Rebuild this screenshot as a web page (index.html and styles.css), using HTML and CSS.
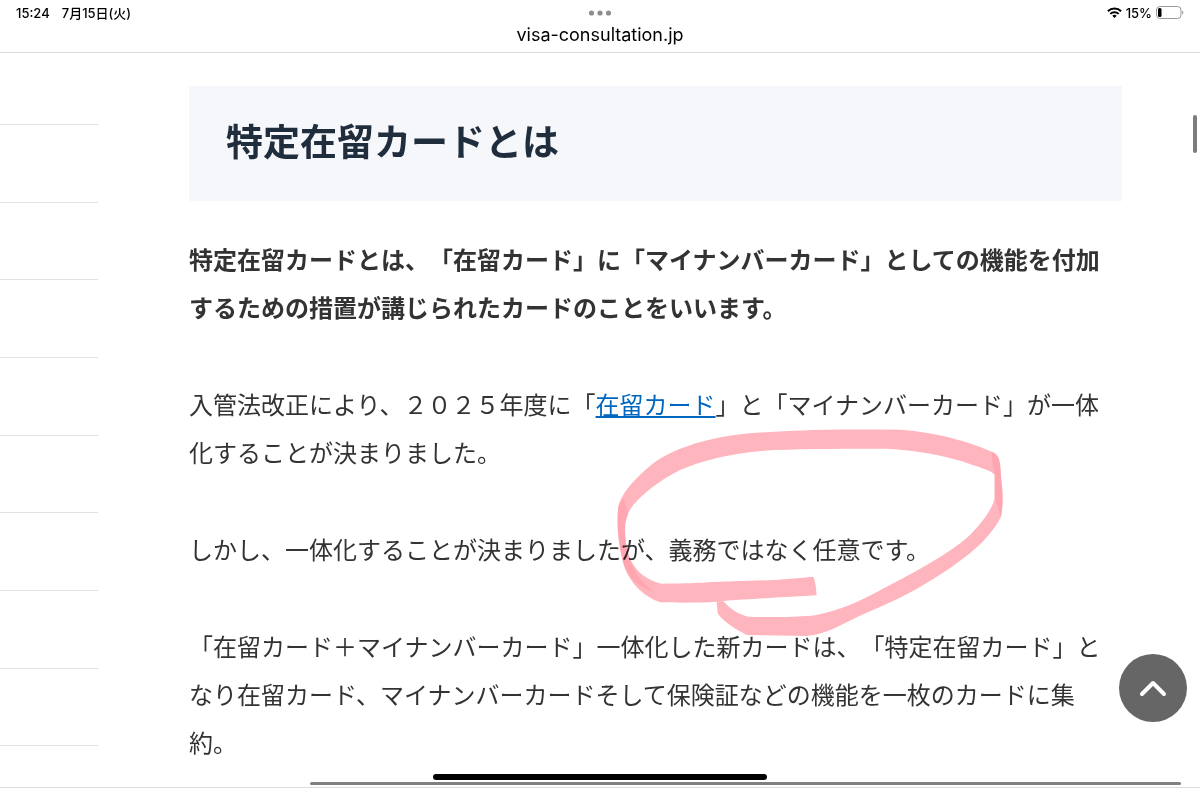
FILE: index.html
```
<!DOCTYPE html>
<html lang="ja">
<head>
    <meta charset="UTF-8">
    <meta name="viewport" content="width=device-width, initial-scale=1.0">
    <title>特定在留カードとは</title>
    <link rel="stylesheet" href="styles.css">
</head>
<body>

    <header class="topbar">
        <div class="status">
            <div class="status-left">
                <span>15:24</span>
                <span>7月15日(火)</span>
            </div>
            <svg class="dots" width="24" height="6" viewBox="0 0 24 6" fill="#8e8e8e" aria-hidden="true">
                <circle cx="3.5" cy="3" r="2.6"/>
                <circle cx="12" cy="3" r="2.6"/>
                <circle cx="20.5" cy="3" r="2.6"/>
            </svg>
            <div class="status-right">
                <svg width="15" height="11" viewBox="0 0 15 11" aria-hidden="true">
                    <g fill="none" stroke="#000" stroke-width="2">
                        <path d="M.9 4.3a9.4 9.4 0 0 1 13.2 0"/>
                        <path d="M3.3 6.9a6 6 0 0 1 8.4 0"/>
                    </g>
                    <path d="M7.5 10.9 5.3 8.7a3.2 3.2 0 0 1 4.4 0z"/>
                </svg>
                <span>15%</span>
                <svg width="28" height="13" viewBox="0 0 28 13" aria-hidden="true">
                    <rect x=".5" y=".5" width="24.5" height="12" rx="3.5" fill="none" stroke="#999"/>
                    <rect x="2" y="2" width="3.5" height="9" rx="1.5"/>
                    <path d="M26.2 4.5c1.6.6 1.6 3.4 0 4z" fill="#999"/>
                </svg>
            </div>
        </div>
        <div class="address">visa-consultation.jp</div>
    </header>

    <div class="page">
        <ul class="side-list">
            <li></li>
            <li></li>
            <li></li>
            <li></li>
            <li></li>
            <li></li>
            <li></li>
            <li></li>
            <li></li>
        </ul>

        <main class="article">
            <h2>特定在留カードとは</h2>
            <p><strong>特定在留カードとは、「在留カード」に「マイナンバーカード」としての機能を付加するための措置が講じられたカードのことをいいます。</strong></p>
            <p>入管法改正により、２０２５年度に「<a href="#">在留カード</a>」と「マイナンバーカード」が一体化することが決まりました。</p>
            <p>しかし、一体化することが決まりましたが、義務ではなく任意です。</p>
            <p>「在留カード＋マイナンバーカード」一体化した新カードは、「特定在留カード」となり在留カード、マイナンバーカードそして保険証などの機能を一枚のカードに集約。</p>
        </main>
    </div>

    <!-- highlighter pen -->
    <svg class="marker" viewBox="0 0 1260 690" aria-hidden="true">
        <path fill="#ffb5be" d="M650 526C550 532 420 538 330 547C260 549 210 548 180 547C130 530 85 485 70 430C55 370 50 320 54 270C56 225 110 170 160 130C220 85 330 50 450 40C600 28 750 28 900 29C1000 35 1110 65 1180 97C1205 110 1200 140 1205 190C1209 220 1209 260 1203 290C1180 335 1150 365 1110 400C1020 470 930 525 800 578C730 608 690 640 620 648L440 645C400 625 365 600 353 580L350 545L370 543C390 565 410 582 445 590C520 592 600 592 645 586C720 570 780 545 860 500C960 450 1070 385 1110 345C1150 305 1180 260 1184 235L1184 165C1175 150 1130 140 1090 125C1020 105 950 90 860 86C760 86 620 86 520 90C400 98 310 120 240 150C180 180 130 220 100 255C85 275 78 290 76 310C73 350 78 390 95 425C110 455 140 480 185 491C300 491 320 486 400 484C500 482 560 478 640 470C647 485 648 505 650 526Z"/>
        <path fill="#ff98a4" d="M1176 96C1200 108 1202 135 1205 190C1209 220 1209 260 1203 290L1184 235L1184 165C1180 140 1174 120 1176 96ZM54 270C50 320 55 370 70 430C85 475 120 505 160 515C120 480 98 450 86 410C76 370 74 335 76 310L85 282L70 235C58 250 55 260 54 270Z" opacity=".5"/>
    </svg>

    <button class="to-top" type="button" aria-label="ページの先頭へ">
        <svg width="28" height="18" viewBox="0 0 28 18" fill="none" stroke="#fff" stroke-width="4" stroke-linecap="round" stroke-linejoin="round" aria-hidden="true">
            <path d="M3 15 14 4l11 11"/>
        </svg>
    </button>

    <div class="scroll-y"></div>
    <div class="scroll-x"></div>
    <div class="home-bar"></div>

</body>
</html>
```

FILE: styles.css
```
* {
    box-sizing: border-box;
}
body {
    margin: 0;
    min-height: 100vh;
    display: flex;
    flex-direction: column;
    background: #fff;
    color: #333;
    font-family: "Noto Sans CJK JP", sans-serif;
    border-bottom: 1px solid #ddd;
}
.topbar {
    height: 53px;
    border-bottom: 1px solid #dcdcdc;
    color: #000;
    font-family: Inter, "Noto Sans CJK JP", sans-serif;
}
.status {
    display: grid;
    grid-template-columns: 1fr auto 1fr;
    align-items: center;
    height: 25px;
    padding: 0 16px;
    font-size: 13px;
    font-weight: 500;
    line-height: 16px;
}
.status-left {
    display: flex;
    gap: 12px;
}
.status-right {
    display: flex;
    align-items: center;
    justify-content: flex-end;
    gap: 4px;
}
.address {
    font-size: 18px;
    line-height: 20px;
    text-align: center;
}
.page {
    flex: 1;
    display: flex;
}
.side-list {
    width: 98px;
    margin: 0;
    padding: 0;
    list-style: none;
}
.side-list li {
    height: 78px;
    border-bottom: 1px solid #e2e2e2;
}
.side-list li:nth-child(3n) {
    height: 77px;
}
.side-list li:first-child {
    height: 72px;
}
.article {
    flex: 1;
    padding: 33px 78px 0 91px;
    text-spacing-trim: space-all;
}
.article h2 {
    margin: 0 0 34px;
    padding: 26px 37px 33px;
    background: #f6f7fa;
    color: #1f2d3d;
    font-size: 37px;
    font-weight: 700;
    line-height: 56px;
}
.article p {
    margin: 0 0 49px;
    font-size: 24px;
    line-height: 48px;
}
.article p:last-child {
    margin-bottom: 0;
}
.article a {
    color: #0066bf;
}
.marker {
    position: absolute;
    top: 420px;
    left: 600px;
    width: 420px;
    mix-blend-mode: multiply;
    pointer-events: none;
}
.to-top {
    position: fixed;
    right: 13px;
    bottom: 66px;
    display: flex;
    align-items: center;
    justify-content: center;
    width: 68px;
    height: 68px;
    padding: 0;
    border: none;
    border-radius: 50%;
    background: #666;
    cursor: pointer;
}
.scroll-y {
    position: fixed;
    top: 115px;
    right: 3px;
    width: 4px;
    height: 38px;
    border-radius: 2px;
    background: #7c7c7c;
}
.scroll-x {
    position: fixed;
    right: 19px;
    bottom: 3px;
    left: 310px;
    height: 3px;
    border-radius: 2px;
    background: #808080;
}
.home-bar {
    position: fixed;
    right: 433px;
    bottom: 8px;
    left: 433px;
    height: 6px;
    border-radius: 3px;
    background: #000;
}
```
